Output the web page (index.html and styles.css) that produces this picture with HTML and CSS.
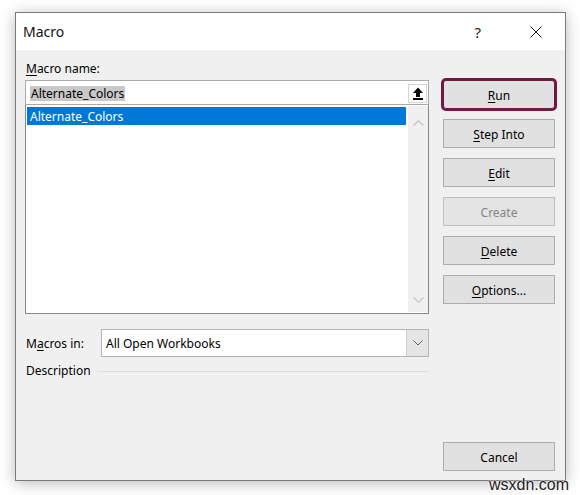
FILE: index.html
```html
<!DOCTYPE html>
<html lang="en">

<head>
    <meta charset="UTF-8">
    <title>Macro</title>
    <link rel="stylesheet" href="styles.css">
</head>

<body>
    <div class="dialog">
        <div class="titlebar">
            <span class="title">Macro</span>
            <span class="help">?</span>
            <svg class="close" width="12" height="12" viewBox="0 0 12 12">
                <path d="M0.5 0.5 L11.5 11.5 M11.5 0.5 L0.5 11.5" stroke="#222" stroke-width="1" fill="none" />
            </svg>
        </div>

        <div class="content">
            <div class="left">
                <div class="label"><u>M</u>acro name:</div>
                <div class="namebox">
                    <span class="seltext">Alternate_Colors</span>
                    <span class="upbtn">
                        <svg width="12" height="13" viewBox="0 0 12 13">
                            <path d="M6 0.5 L11 6 L8 6 L8 10 L4 10 L4 6 L1 6 Z" fill="#000" />
                            <rect x="1" y="11" width="10" height="2" fill="#000" />
                        </svg>
                    </span>
                </div>
                <div class="listbox">
                    <div class="items">
                        <div class="item selected">Alternate_Colors</div>
                    </div>
                    <div class="scrollbar">
                        <svg width="11" height="6" viewBox="0 0 11 6">
                            <path d="M0.5 5.5 L5.5 0.8 L10.5 5.5" stroke="#c4c4c4" stroke-width="1.2" fill="none" />
                        </svg>
                        <svg width="11" height="6" viewBox="0 0 11 6">
                            <path d="M0.5 0.5 L5.5 5.2 L10.5 0.5" stroke="#c4c4c4" stroke-width="1.2" fill="none" />
                        </svg>
                    </div>
                </div>
                <div class="macros-in">
                    <span class="inlabel">M<u>a</u>cros in:</span>
                    <div class="select">
                        <span class="selvalue">All Open Workbooks</span>
                        <span class="dropbtn">
                            <svg width="10" height="6" viewBox="0 0 10 6">
                                <path d="M0.5 0.5 L5 5 L9.5 0.5" stroke="#606060" stroke-width="1" fill="none" />
                            </svg>
                        </span>
                    </div>
                </div>
                <div class="description">Description</div>
            </div>

            <div class="right">
                <div class="btn default"><u>R</u>un</div>
                <div class="btn"><u>S</u>tep Into</div>
                <div class="btn"><u>E</u>dit</div>
                <div class="btn disabled">Create</div>
                <div class="btn"><u>D</u>elete</div>
                <div class="btn"><u>O</u>ptions...</div>
                <div class="btn cancel">Cancel</div>
            </div>
        </div>
    </div>

    <div class="watermark">wsxdn.com</div>
</body>

</html>
```

FILE: styles.css
```css
body {
    margin: 0;
    width: 580px;
    height: 495px;
    background: #fff;
    font-family: 'Noto Sans', sans-serif;
    font-size: 12px;
    color: #000;
    position: relative;
    overflow: hidden;
}

u {
    text-decoration: underline;
    text-underline-offset: 2px;
}

.dialog {
    margin: 12px 0 0 15px;
    width: 551px;
    height: 469px;
    box-sizing: border-box;
    border: 1px solid #7a7a7a;
    background: #f0f0f0;
    box-shadow: 0 2px 14px rgba(0, 0, 0, 0.28);
    display: flex;
    flex-direction: column;
}

.titlebar {
    height: 37px;
    background: #fff;
    display: flex;
    align-items: center;
    padding: 0 0 0 7px;
}

.title {
    font-size: 14px;
    flex: 1;
    color: #111;
    padding-bottom: 1px;
}

.help {
    font-size: 15px;
    margin-right: 49px;
    color: #222;
}

.close {
    margin-right: 23px;
}

.content {
    flex: 1;
    display: flex;
    padding: 10px 10px 9px 9px;
}

.left {
    width: 404px;
    display: flex;
    flex-direction: column;
}

.label {
    height: 20px;
    line-height: 18px;
    padding-left: 1px;
}

.namebox {
    height: 25px;
    box-sizing: border-box;
    border: 1px solid #a9a9a9;
    background: #fff;
    display: flex;
    align-items: center;
    padding: 1px 1px 0 4px;
}

.seltext {
    background: #c9c9c9;
    line-height: 15px;
    padding: 0 1px;
    flex: none;
}

.upbtn {
    margin-left: auto;
    width: 19px;
    height: 19px;
    box-sizing: border-box;
    border: 1px solid #d5d5d5;
    background: #fff;
    display: flex;
    align-items: center;
    justify-content: center;
}

.listbox {
    height: 209px;
    box-sizing: border-box;
    border: 1px solid #828790;
    border-top: none;
    background: #fff;
    display: flex;
    padding: 1px 0 1px 1px;
}

.items {
    flex: 1;
    padding-top: 1px;
}

.item {
    height: 18px;
    line-height: 20px;
    padding-left: 3px;
}

.item.selected {
    background: #0078d7;
    color: #fff;
}

.scrollbar {
    width: 20px;
    background: #f0f0f0;
    margin-left: 2px;
    display: flex;
    flex-direction: column;
    align-items: center;
    justify-content: space-between;
    padding: 14px 0 9px;
}

.macros-in {
    margin-top: 15px;
    display: flex;
    align-items: center;
}

.inlabel {
    width: 75px;
    padding-left: 1px;
}

.select {
    flex: 1;
    height: 28px;
    box-sizing: border-box;
    border: 1px solid #b5b5b5;
    background: #fff;
    display: flex;
    align-items: center;
}

.selvalue {
    flex: 1;
    padding-left: 4px;
}

.dropbtn {
    width: 21px;
    height: 26px;
    background: #e5e5e5;
    border-left: 1px solid #cfcfcf;
    display: flex;
    align-items: center;
    justify-content: center;
}

.description {
    margin-top: 4px;
    display: flex;
    align-items: center;
    gap: 6px;
    padding-left: 1px;
    line-height: 20px;
}

.description::after {
    content: '';
    flex: 1;
    border-top: 1px solid #dcdcdc;
}

.right {
    margin-left: 14px;
    width: 112px;
    display: flex;
    flex-direction: column;
    gap: 10px;
    padding-top: 20px;
}

.btn {
    height: 29px;
    box-sizing: border-box;
    border: 1px solid #adadad;
    background: #e1e1e1;
    display: flex;
    align-items: center;
    justify-content: center;
    padding-top: 2px;
    color: #000;
}

.btn.default {
    border-color: #6e1a3f;
    box-shadow: 0 0 0 2px #6e1a3f;
    border-radius: 3px;
}

.btn.disabled {
    color: #838383;
    border-color: #bfbfbf;
    background: #e4e4e4;
}

.btn.cancel {
    margin-top: auto;
}

.watermark {
    position: absolute;
    right: 11px;
    bottom: 1px;
    font-family: 'Liberation Sans', Arial, sans-serif;
    font-size: 16px;
    color: #222;
    text-shadow: 0 0 2px #fff, 0 0 2px #fff;
}
```
